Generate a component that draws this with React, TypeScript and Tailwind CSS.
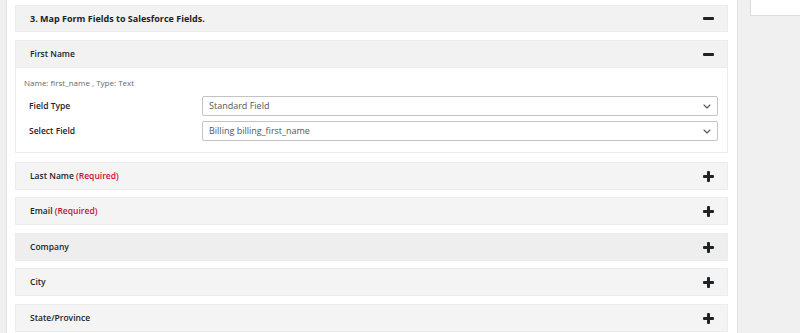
import React from "react"

function Minus() {
  return <span className="block w-[11px] h-[3px] bg-[#1d2327] rounded-[1px]" />
}

function Plus() {
  return (
    <span className="relative block w-[11px] h-[11px]">
      <span className="absolute left-0 top-[4px] w-[11px] h-[3px] bg-[#1d2327] rounded-[1px]" />
      <span className="absolute top-0 left-[4px] w-[3px] h-[11px] bg-[#1d2327] rounded-[1px]" />
    </span>
  )
}

function Chevron() {
  return (
    <svg width="8" height="5" viewBox="0 0 8 5" fill="none">
      <path d="M1 1l3 3 3-3" stroke="#50575e" strokeWidth="1.1" strokeLinecap="round" strokeLinejoin="round" />
    </svg>
  )
}

function Row({ label, required, dark, className }: { label: string; required?: boolean; dark?: boolean; className?: string }) {
  return (
    <div className={`h-[28px] flex items-center justify-between pl-[14px] pr-[13px] border border-[#ececec] ${dark ? "bg-[#eeeeee]" : "bg-[#f4f4f4]"} ${className ?? ""}`}>
      <span className="text-[8.5px] font-semibold text-[#1d2327]">
        {label}
        {required && <span className="text-[#c8102e]"> (Required)</span>}
      </span>
      <Plus />
    </div>
  )
}

function SelectBox({ value }: { value: string }) {
  return (
    <div className="w-[516px] h-[20px] border border-[#c3c4c7] rounded-[2px] bg-white flex items-center justify-between pl-[6px] pr-[6px]">
      <span className="text-[9px] text-[#50575e]">{value}</span>
      <Chevron />
    </div>
  )
}

export default function App() {
  return (
    <div className="w-[800px] h-[333px] overflow-hidden flex bg-[#f0f0f1]" style={{ fontFamily: '"Open Sans", "Noto Sans", sans-serif' }}>
      <div className="w-[7px] border-r border-[#e2e2e2] bg-[#f0f0f1]" />
      <div className="w-[731px] bg-white border-r border-[#e0e0e0] pl-[8px] pr-[9px] pt-[5px]">
        <div className="h-[27px] flex items-center justify-between pl-[14px] pr-[13px] bg-[#f2f2f2] border border-[#ececec]">
          <span className="text-[9px] font-bold text-[#1d2327]">3. Map Form Fields to Salesforce Fields.</span>
          <Minus />
        </div>

        <div className="mt-[8px]">
          <div className="h-[28px] flex items-center justify-between pl-[14px] pr-[13px] bg-[#f2f2f2] border border-[#ececec]">
            <span className="text-[8.5px] font-semibold text-[#1d2327]">First Name</span>
            <Minus />
          </div>
          <div className="border border-t-0 border-[#ececec] pl-[8px] pt-[9px] pb-[11px]">
            <p className="text-[8px] text-[#646970] leading-[12px]">Name: first_name , Type: Text</p>
            <div className="mt-[7px] flex items-center">
              <span className="w-[178px] pl-[5px] text-[8.5px] font-semibold text-[#1d2327]">Field Type</span>
              <SelectBox value="Standard Field" />
            </div>
            <div className="mt-[5px] flex items-center">
              <span className="w-[178px] pl-[5px] text-[8.5px] font-semibold text-[#1d2327]">Select Field</span>
              <SelectBox value="Billing billing_first_name" />
            </div>
          </div>
        </div>

        <Row label="Last Name" required className="mt-[9px]" />
        <Row label="Email" required className="mt-[7px]" />
        <Row label="Company" dark className="mt-[8px]" />
        <Row label="City" className="mt-[7px]" />
        <Row label="State/Province" className="mt-[8px]" />
      </div>
      <div className="flex-1 bg-[#f0f0f0]">
        <div className="ml-[12px] h-[16px] bg-white border border-[#dcdcde] border-t-0 border-r-0" />
      </div>
    </div>
  )
}
